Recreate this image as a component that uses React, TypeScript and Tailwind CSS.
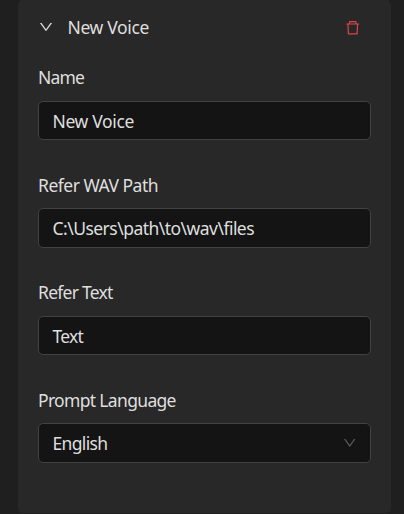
import { AiOutlineDelete, AiOutlineDown } from "react-icons/ai";

interface FieldProps {
  label: string;
  value: string;
  labelClass: string;
  valueClass: string;
  boxClass: string;
  select?: boolean;
}

function Field({ label, value, labelClass, valueClass, boxClass, select }: FieldProps) {
  return (
    <div className="flex flex-col">
      <div className="flex items-start leading-6">
        <span className={labelClass}>{label}</span>
      </div>
      <div
        className={`flex items-center justify-between rounded-[5px] border border-[#424242] bg-[#141414] pl-[13.5px] pr-[13px] leading-6 ${boxClass}`}
      >
        <span className={valueClass}>{value}</span>
        {select && <AiOutlineDown className="size-[15.5px] text-[#5c5c5c]" />}
      </div>
    </div>
  );
}

export default function App() {
  return (
    <div className="h-[514px] w-[404px] overflow-hidden bg-[#1f1f1f] pl-[18px] pr-[13px] font-['Noto_Sans',sans-serif] text-[17.5px] text-[#dfdfdf]">
      <div className="h-[513px] rounded-[5px] bg-[#282828] px-5">
        <div className="flex h-[65px] items-start pt-[15px] leading-6">
          <AiOutlineDown className="mt-[4px] -ml-[0.5px] size-[16px]" />
          <span className="ml-[14px] tracking-[-0.35px]">New Voice</span>
          <AiOutlineDelete className="ml-auto mr-[9.5px] mt-[3.5px] size-[17.5px] text-[#dc4446]" />
        </div>
        <Field label="Name" value="New Voice" labelClass="tracking-[-0.8px]" valueClass="tracking-[-0.35px]" boxClass="mt-[12px] mb-[33px] h-[39px] pt-px" />
        <Field label="Refer WAV Path" value="C:\Users\path\to\wav\files" labelClass="tracking-[-0.5px]" valueClass="tracking-[-0.53px]" boxClass="mt-[11px] mb-[32px] h-10" />
        <Field label="Refer Text" value="Text" labelClass="tracking-[-0.75px]" valueClass="tracking-[-0.8px]" boxClass="mt-[12px] mb-[33px] h-[39px] pt-px" />
        <Field label="Prompt Language" value="English" labelClass="tracking-[-0.67px]" valueClass="tracking-[-0.65px]" boxClass="mt-[11px] h-10" select />
      </div>
    </div>
  );
}
